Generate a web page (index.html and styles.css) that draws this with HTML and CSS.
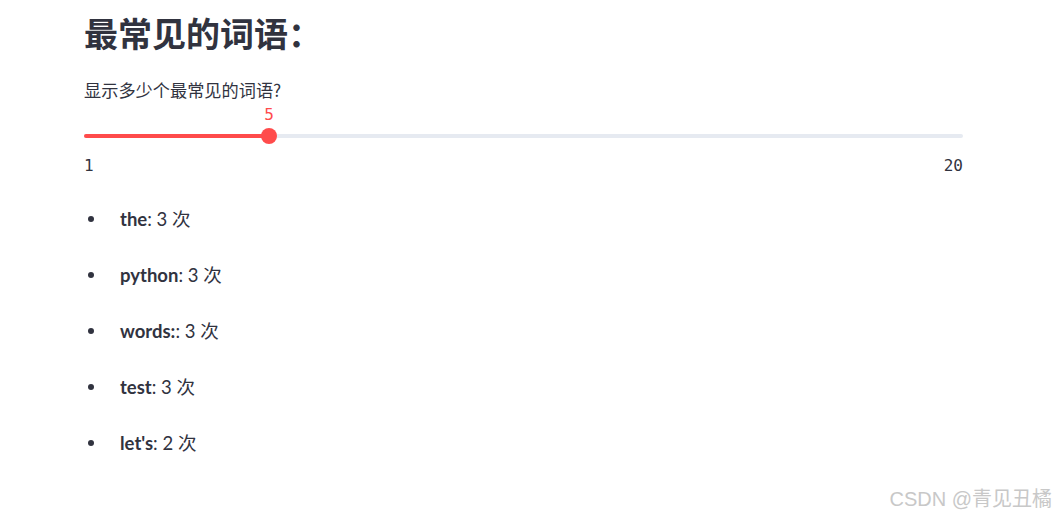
FILE: index.html
```html
<!DOCTYPE html>
<html lang="zh">
<head>
    <meta charset="UTF-8">
    <title>最常见的词语</title>
    <link rel="stylesheet" href="styles.css">
</head>
<body>
    <main class="block">
        <h2 class="title">最常见的词语：</h2>
        <label class="label" for="topN">显示多少个最常见的词语?</label>
        <div class="slider" style="--pos: 21.05%">
            <div class="valueRow"><span class="value">5</span></div>
            <div class="track">
                <div class="fill"></div>
                <div class="thumb"></div>
            </div>
            <div class="ticks"><span>1</span><span>20</span></div>
        </div>
        <ul class="words">
            <li><b>the</b>: 3 次</li>
            <li><b>python</b>: 3 次</li>
            <li><b>words:</b>: 3 次</li>
            <li><b>test</b>: 3 次</li>
            <li><b>let's</b>: 2 次</li>
        </ul>
    </main>
    <div class="watermark">CSDN @青见丑橘</div>
</body>
</html>
```

FILE: styles.css
```css
body {
    margin: 0;
    background: #fff;
    color: #31333f;
    font-family: "Source Sans Pro", Lato, "Noto Sans CJK SC", sans-serif;
}

.block {
    width: 879px;
    padding: 13px 0 0 84px;
    display: flex;
    flex-direction: column;
}

.title {
    margin: 0;
    font-size: 34px;
    line-height: 40px;
    font-weight: 700;
    font-family: "Noto Sans CJK SC", sans-serif;
}

.label {
    margin-top: 27px;
    font-size: 17.2px;
    line-height: 20px;
    font-family: "Noto Sans CJK SC", sans-serif;
}

.slider {
    display: flex;
    flex-direction: column;
}

.valueRow {
    position: relative;
    height: 20px;
    margin-top: 5px;
}

.value {
    position: absolute;
    left: var(--pos);
    transform: translateX(-50%);
    color: #ff4b4b;
    font: 16px/20px "DejaVu Sans Mono", monospace;
}

.track {
    position: relative;
    height: 4px;
    margin-top: 9px;
    border-radius: 2px;
    background: #e6eaf1;
}

.fill {
    width: var(--pos);
    height: 100%;
    border-radius: 2px;
    background: #ff4b4b;
}

.thumb {
    position: absolute;
    left: var(--pos);
    top: 50%;
    width: 16px;
    height: 16px;
    border-radius: 50%;
    background: #ff4b4b;
    transform: translate(-50%, -50%);
}

.ticks {
    display: flex;
    justify-content: space-between;
    margin-top: 18px;
    font: 16px/20px "DejaVu Sans Mono", monospace;
}

.words {
    list-style: none;
    margin: 31px 0 0;
    padding: 0;
    display: flex;
    flex-direction: column;
    gap: 32px;
}

.words li {
    display: flex;
    align-items: center;
    font-size: 18.5px;
    line-height: 24px;
}

.words li::before {
    content: "";
    width: 6px;
    height: 6px;
    border-radius: 50%;
    background: #31333f;
    margin: 0 26px 0 4px;
}

.words b {
    font-weight: 700;
}

.watermark {
    position: absolute;
    right: 3px;
    bottom: 5px;
    color: #c8c8c8;
    font: 20px "Liberation Sans", "Noto Sans CJK SC", sans-serif;
}
```
